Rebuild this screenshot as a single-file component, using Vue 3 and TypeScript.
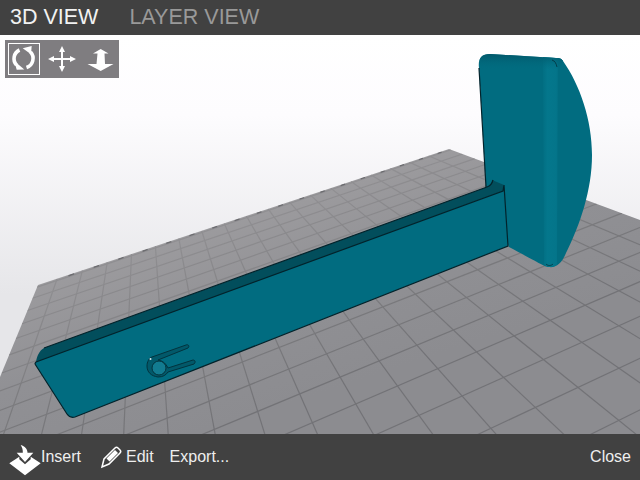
<script setup lang="ts">
import { computed } from 'vue'

type Pt = [number, number]

// plate perspective, measured from the screenshot
const origin: Pt = [38, 285]
const vpU: Pt = [2606, -565]
const vpV: Pt = [141, 35]
const plateS = 0.1905
const stepS = 0.0101
const stepT = 0.042

function project(s: number, t: number): Pt {
  const w = s - t + 1
  return [(s * vpU[0] - t * vpV[0] + origin[0]) / w, (s * vpU[1] - t * vpV[1] + origin[1]) / w]
}

function seg(a: Pt, b: Pt) {
  return `M${a[0].toFixed(1)} ${a[1].toFixed(1)}L${b[0].toFixed(1)} ${b[1].toFixed(1)}`
}

const gridLines = computed(() => {
  const lines: { id: string; d: string }[] = []
  for (let i = 1; i < 19; i++) {
    const s = stepS * i - 0.0026
    lines.push({ id: 'u' + i, d: seg(project(s, 0), project(s, 0.9)) })
  }
  for (let i = 0; i < 22; i++) {
    const t = stepT * (i + 0.2)
    lines.push({ id: 'v' + i, d: seg(project(0, t), project(plateS, t)) })
  }
  return lines
})

// little marks printed along the far edge of the plate
const edgeTicks = computed(() => {
  const ticks: { id: string; d: string }[] = []
  for (let i = 1; i < 19; i++) {
    const s = stepS * i + 0.002
    ticks.push({ id: 't' + i, d: seg(project(s, 0.0035), project(s + 0.0022, 0.0035)) })
  }
  return ticks
})
</script>

<template>
  <div class="app">
    <div class="top-bar">
      <span class="tab active">3D VIEW</span>
      <span class="tab">LAYER VIEW</span>
    </div>
    <div class="view">
      <svg class="scene" viewBox="0 35 640 399">
        <defs>
          <linearGradient id="sky" x1="0" y1="35" x2="0" y2="434" gradientUnits="userSpaceOnUse">
            <stop offset="0" stop-color="#ffffff" />
            <stop offset="0.2" stop-color="#fdfcfe" />
            <stop offset="0.65" stop-color="#e6e6e9" />
          </linearGradient>
          <linearGradient id="plate" x1="240" y1="215" x2="300" y2="400" gradientUnits="userSpaceOnUse">
            <stop offset="0" stop-color="#9c9b9e" />
            <stop offset="0.5" stop-color="#909094" />
            <stop offset="1" stop-color="#8c8c90" />
          </linearGradient>
          <linearGradient id="gridInk" x1="240" y1="215" x2="300" y2="400" gradientUnits="userSpaceOnUse">
            <stop offset="0" stop-color="#908f92" />
            <stop offset="0.6" stop-color="#7a7a7d" />
            <stop offset="1" stop-color="#727276" />
          </linearGradient>
          <linearGradient id="band" x1="541" y1="0" x2="560" y2="0" gradientUnits="userSpaceOnUse">
            <stop offset="0" stop-color="#016c80" />
            <stop offset="0.35" stop-color="#04778c" />
            <stop offset="0.8" stop-color="#04758a" />
            <stop offset="1" stop-color="#016b7f" />
          </linearGradient>
          <linearGradient id="capTop" x1="0" y1="54" x2="0" y2="70" gradientUnits="userSpaceOnUse">
            <stop offset="0" stop-color="#02586a" />
            <stop offset="1" stop-color="#016c80" stop-opacity="0" />
          </linearGradient>
          <clipPath id="plateClip">
            <path d="M38 285L449 149L640 220V434H0V377Z" />
          </clipPath>
        </defs>
        <rect x="0" y="35" width="640" height="399" fill="url(#sky)" />
        <path d="M38 285L449 149L640 220V434H0V377Z" fill="url(#plate)" />
        <g clip-path="url(#plateClip)" class="grid">
          <path v-for="l in gridLines" :key="l.id" :d="l.d" />
          <path v-for="t in edgeTicks" :key="t.id" class="tick" :d="t.d" />
        </g>

        <!-- upright -->
        <path
          class="teal"
          d="M479 68C478 59 481 54 490 54L556 58C559 58 561 58 563 61C580 85 592 120 592 155C592 190 580 225 566 253C562 263 556 268 549 267C545 267 541 264 509 247L486 187Z"
        />
        <path d="M543 57L556 58C559 58 561 58 563 61L558 63L557 264C555 267 552 267 549 267L544 265Z" fill="url(#band)" />
        <path
          d="M479 68C478 59 481 54 490 54L556 58C559 58 561 58 563 61L560 70L481 70Z"
          fill="url(#capTop)"
        />
        <path class="edge" d="M479 68L486 187" />
        <path class="thin" d="M552 60C555 61 556 63 557 67M546 264C548 266 551 266 553 264" />

        <!-- base wall and inner strip -->
        <path
          d="M36 362C37 356 39 351 44 348L487 187C490 186 492 184 492 180L504 185L503 191L42 362Z"
          fill="#024e5c"
        />
        <path
          class="teal"
          d="M35 364C35 363 35.500 362.500 36 362L503 191L508 246L75 417C71 418 69 417 67 414Z"
        />
        <path class="edge" d="M44 348L487 187C490 186 492 184 493 180" />
        <path class="edge" d="M35 364C35 363 35.500 362.500 36 362L503 191L504 185L508 246L75 417C71 418 69 417 67 414L35 364" />

        <!-- clip slot -->
        <path
          class="slot"
          d="M152 357C149 358 147 362 147 366C147 372 151 376 158 377C163 377 166 375 168 372L194 364C196 362 195 360 193 360L168 368C165 362 162 361 158 360L188 348C190 346 188 344 186 345Z"
        />
        <circle class="peg" cx="159" cy="368" r="7" />
        <circle cx="150.500" cy="359" r="1" fill="#d8e6ea" />
      </svg>

      <div class="tools">
        <button class="tool selected" aria-label="Rotate">
          <svg viewBox="0 0 32 32" width="32" height="32">
            <path class="ic-stroke" d="M11.500 7A9.500 9.500 0 0 0 8.500 22" />
            <path class="ic-fill" d="M6.300 18L16.300 26.500L8.700 26.800Z" />
            <path class="ic-stroke" d="M18.500 24.500A9.500 9.500 0 0 0 22.500 9" />
            <path class="ic-fill" d="M14.700 5.300L23.700 3L23 11.300Z" />
          </svg>
        </button>
        <button class="tool" aria-label="Move">
          <svg viewBox="0 0 32 32" width="32" height="32">
            <path class="ic-fill" d="M16 3L19 9H17V15H24V13L30 16L24 19V17H17V23H19L16 29L13 23H15V17H8V19L2 16L8 13V15H15V9H13Z" />
          </svg>
        </button>
        <button class="tool" aria-label="Scale">
          <svg viewBox="0 0 32 32" width="32" height="32">
            <path class="ic-fill" d="M16.700 6L24.500 10.500H20.500L21 21H29.500L16.700 28L3.500 21H12.500L13.500 10.500H9Z" />
          </svg>
        </button>
      </div>
    </div>
    <div class="bottom-bar">
      <span class="action insert">
        <svg viewBox="0 0 32 33" width="32" height="33">
          <path class="ic-fill" d="M0.300 20.300L10.300 13.700V16.300L16 21.300L21.700 16.300V13.700L31.700 20.300L16 32.300Z" />
          <path class="ic-fill" d="M11.700 2C16 3.500 18.500 6 18.500 9.700H24.300L16 19L7.700 9.700H13.800C14 7 13.300 4.500 11.700 2Z" />
        </svg>
        Insert
      </span>
      <span class="action edit">
        <svg viewBox="0 0 22 24" width="22" height="24">
          <path class="ic-line" d="M2 22L4 14L15 3C16 2 17 2 18 3L20 5C21 6 21 7 20 8L9 19Z" />
          <path class="ic-fill" d="M6.500 13.500L15 5L18 8L9.500 16.500Z" />
        </svg>
        Edit
      </span>
      <span class="action export">Export...</span>
      <span class="action close">Close</span>
    </div>
  </div>
</template>

<style scoped>
.app {
  width: 640px;
  height: 480px;
  display: flex;
  flex-direction: column;
  overflow: hidden;
  font-family: 'Liberation Sans', Arial, sans-serif;
}

.top-bar {
  height: 35px;
  flex: none;
  display: flex;
  align-items: center;
  gap: 31px;
  padding-left: 10px;
  background: #414141;
  box-sizing: border-box;
}

.tab {
  font-size: 21.500px;
  color: #999;
}

.tab.active {
  color: #f2f2f2;
}

.view {
  position: relative;
  flex: 1;
  min-height: 0;
}

.scene {
  display: block;
  width: 640px;
  height: 399px;
}

.teal {
  fill: #016c80;
}

.grid {
  filter: blur(0.5px);
}

.grid path {
  stroke: url(#gridInk);
  stroke-width: 1.2;
  fill: none;
}

.grid path.tick {
  stroke: #6c6c70;
  stroke-width: 1.5;
}

.edge {
  fill: none;
  stroke: #03232b;
  stroke-width: 1.2;
}

.thin {
  fill: none;
  stroke: #04303a;
  stroke-width: 0.8;
}

.slot {
  fill: #02596a;
  stroke: #03333d;
  stroke-width: 1;
}

.peg {
  fill: #127b90;
  stroke: #03333d;
  stroke-width: 1;
}

.tools {
  position: absolute;
  left: 5px;
  top: 5px;
  display: flex;
  gap: 6px;
  padding: 3px;
  background: #7f7d80;
}

.tool {
  width: 32px;
  height: 32px;
  padding: 0;
  border: 1px solid transparent;
  background: none;
  box-sizing: border-box;
  display: flex;
  align-items: center;
  justify-content: center;
}

.tool.selected {
  border-color: #fff;
}

.tool svg {
  flex: none;
}

.ic-stroke {
  fill: none;
  stroke: #fff;
  stroke-width: 3.6;
}

.ic-fill {
  fill: #fff;
}

.ic-line {
  fill: none;
  stroke: #fff;
  stroke-width: 1.5;
}

.bottom-bar {
  height: 46px;
  flex: none;
  display: flex;
  align-items: center;
  padding: 0 9px;
  background: #414141;
  box-sizing: border-box;
}

.action {
  font-size: 16px;
  color: #eee;
  display: flex;
  align-items: center;
}

.insert svg {
  margin-top: 4px;
}

.edit {
  margin-left: 19px;
}

.edit svg {
  margin-right: 4px;
}

.export {
  margin-left: 16px;
}

.close {
  margin-left: auto;
}
</style>
